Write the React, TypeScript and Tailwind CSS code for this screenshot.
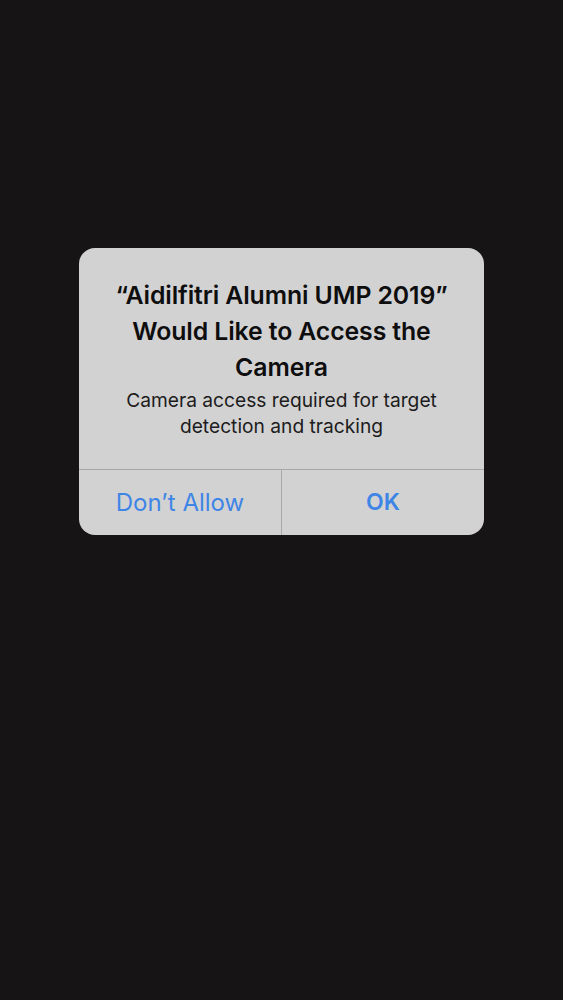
export default function App() {
  return (
    <div
      className="min-h-screen w-full bg-[#161415] pt-[248px]"
      style={{ fontFamily: "Inter, 'Liberation Sans', sans-serif" }}
    >
      <div className="ml-[79px] w-[405px] overflow-hidden rounded-[16px] bg-[#d3d2d3]">
        <div className="px-4 pt-[29px] pb-[30px] text-center">
          <div className="text-[24.8px] font-semibold leading-[36px] tracking-[-0.1px] text-[#0e0e0e]">
            “Aidilfitri Alumni UMP 2019”
            <br />
            Would Like to Access the
            <br />
            Camera
          </div>
          <div className="mt-[2px] text-[19.2px] leading-[26px] text-[#1c1c1c]">
            Camera access required for target
            <br />
            detection and tracking
          </div>
        </div>
        <div className="flex h-[66px] border-t border-[#a8a8a9]">
          <button className="flex-1 border-r border-[#a8a8a9] text-[24px] text-[#3e85e6]">
            Don’t Allow
          </button>
          <button className="flex-1 text-[23px] font-semibold text-[#3e85e6]">OK</button>
        </div>
      </div>
    </div>
  );
}
